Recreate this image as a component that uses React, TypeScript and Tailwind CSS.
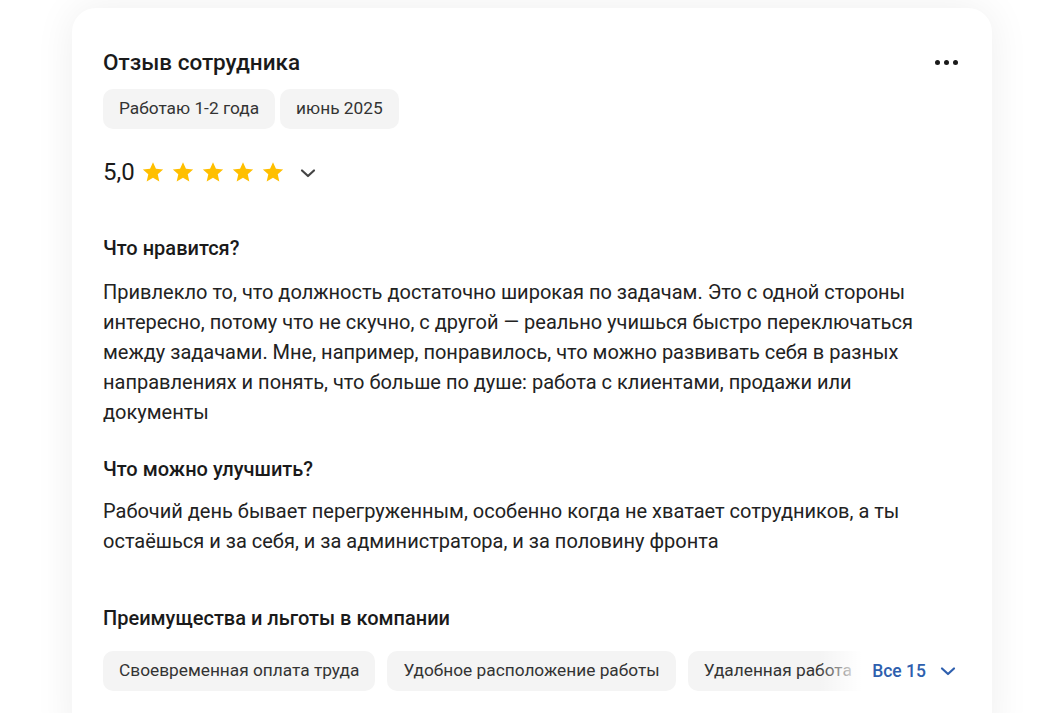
import React from "react";

const Star = () => (
  <svg width="24" height="24" viewBox="0 0 24 24" className="shrink-0">
    <path
      d="M12 2.2l2.95 6.6 7.2.7-5.43 4.82 1.6 7.08L12 17.7l-6.32 3.7 1.6-7.08L1.85 9.5l7.2-.7z"
      fill="#ffbf00"
    />
  </svg>
);

const Chevron = ({ color }: { color: string }) => (
  <svg width="16" height="16" viewBox="0 0 16 16" fill="none">
    <path d="M2 5.5l6 5.5 6-5.5" stroke={color} strokeWidth="2.2" strokeLinecap="round" strokeLinejoin="round" />
  </svg>
);

const Chip = ({ children }: { children: React.ReactNode }) => (
  <div className="h-10 shrink-0 rounded-[10px] bg-[#f4f4f4] px-4 flex items-center text-[17.3px] text-[#333] whitespace-nowrap">
    {children}
  </div>
);

export default function App() {
  return (
    <div
      className="min-h-[713px] bg-white pt-2 pl-[72px] overflow-hidden"
      style={{ fontFamily: "Roboto, 'Noto Sans', sans-serif" }}
    >
      <div className="w-[920px] h-[740px] bg-white rounded-[24px] shadow-[0_0_40px_rgba(0,0,0,0.07)] pt-10 px-[31px] text-[#1f1f1f]">
        <div className="flex items-center justify-between h-7">
          <div className="text-[22.5px] leading-7 font-medium text-[#1a1a1a]">Отзыв сотрудника</div>
          <div className="flex gap-[4px] pr-[3px]">
            <span className="w-[5px] h-[5px] rounded-full bg-[#1a1a1a]" />
            <span className="w-[5px] h-[5px] rounded-full bg-[#1a1a1a]" />
            <span className="w-[5px] h-[5px] rounded-full bg-[#1a1a1a]" />
          </div>
        </div>
        <div className="flex gap-[5px] mt-[13px]">
          <Chip>Работаю 1-2 года</Chip>
          <Chip>июнь 2025</Chip>
        </div>
        <div className="flex items-center h-8 mt-[27px]">
          <span className="text-[24px] text-[#1a1a1a] mr-[6px]">5,0</span>
          <div className="flex gap-[6px]">
            <Star />
            <Star />
            <Star />
            <Star />
            <Star />
          </div>
          <span className="ml-[15px] mt-[1px]">
            <Chevron color="#444" />
          </span>
        </div>
        <div className="mt-[48px] text-[20px] leading-6 font-medium text-[#1a1a1a]">Что нравится?</div>
        <p className="mt-[17px] text-[20px] leading-[30px] text-[#222]">
          Привлекло то, что должность достаточно широкая по задачам. Это с одной стороны интересно, потому что не
          скучно, с другой — реально учишься быстро переключаться между задачами. Мне, например, понравилось, что
          можно развивать себя в разных направлениях и понять, что больше по душе: работа с клиентами, продажи или
          документы
        </p>
        <div className="mt-[30px] text-[20px] leading-6 font-medium text-[#1a1a1a]">Что можно улучшить?</div>
        <p className="mt-[15px] text-[20px] leading-[30px] text-[#222]">
          Рабочий день бывает перегруженным, особенно когда не хватает сотрудников, а ты остаёшься и за себя, и за
          администратора, и за половину фронта
        </p>
        <div className="mt-[50px] text-[20px] leading-6 font-medium text-[#1a1a1a]">
          Преимущества и льготы в компании
        </div>
        <div className="mt-[21px] flex items-center">
          <div className="relative flex-1 overflow-hidden">
            <div className="flex gap-3">
              <Chip>Своевременная оплата труда</Chip>
              <Chip>Удобное расположение работы</Chip>
              <Chip>Удаленная работа</Chip>
              <Chip>Дополнительные выходные</Chip>
            </div>
            <div className="absolute right-0 top-0 h-full w-[44px] bg-gradient-to-r from-white/0 to-white" />
          </div>
          <div className="flex items-center gap-[14px] pl-[10px] pr-[5px] text-[17.5px] font-medium text-[#2e5fae] whitespace-nowrap">
            <span>Все 15</span>
            <Chevron color="#2e5fae" />
          </div>
        </div>
      </div>
    </div>
  );
}
